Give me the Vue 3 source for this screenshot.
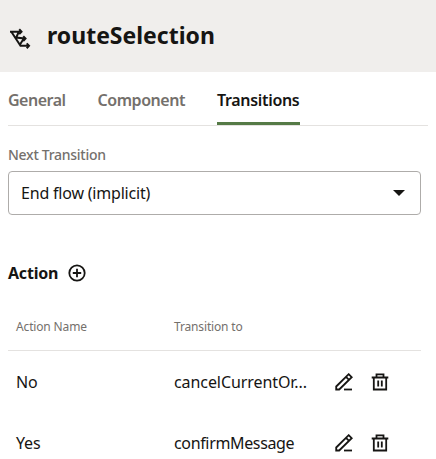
<script setup>
const tabs = [
  { label: 'General', id: 'general' },
  { label: 'Component', id: 'component' },
  { label: 'Transitions', id: 'transitions', active: true },
]
const actions = [
  { name: 'No', target: 'cancelCurrentOr...', key: 'no' },
  { name: 'Yes', target: 'confirmMessage', key: 'yes' },
]
</script>

<template>
  <div class="panel">
    <header class="header">
      <svg class="route" viewBox="0 0 20 20" fill="none" stroke="currentColor" stroke-width="2">
        <path d="M0 2.7H11M1.5 3L10.5 16.8H19M8.5 3.5L6.2 8.6L15 9.6M13.5 10L10 15.5" />
        <path d="M9.2 0.3L11.5 2.7L9.2 5.1M13.2 7.2L15.5 9.6L13.2 12M16.7 14.4L19 16.8L16.7 19.2" />
      </svg>
      <h1 class="title">routeSelection</h1>
    </header>
    <nav class="tabs">
      <a v-for="tab in tabs" :key="tab.id" class="tab" :class="[tab.id, { active: tab.active }]"><span>{{ tab.label }}</span></a>
    </nav>
    <section class="field">
      <div class="label"><span>Next Transition</span></div>
      <div class="select">
        <span class="value">End flow (implicit)</span>
        <svg class="caret" viewBox="0 0 12 6"><path d="M0 0H12L6 6Z" fill="currentColor" /></svg>
      </div>
    </section>
    <div class="action-head">
      <h2>Action</h2>
      <svg class="plus" viewBox="0 0 18 18" fill="none" stroke="currentColor" stroke-width="1.8">
        <circle cx="9" cy="9" r="7.7" />
        <path d="M9 4.8V13.2M4.8 9H13.2" />
      </svg>
    </div>
    <div class="table">
      <div class="row head">
        <span class="c-name">Action Name</span>
        <span class="c-to">Transition to</span>
      </div>
      <div v-for="a in actions" :key="a.key" class="row" :class="a.key">
        <span class="name">{{ a.name }}</span>
        <span class="target">{{ a.target }}</span>
        <span class="tools">
          <svg class="icon" viewBox="0 0 18 18" fill="none" stroke="currentColor" stroke-width="1.8">
            <path d="M1.2 16.5V13.5L13.7 1.2L16.7 4.2L4.2 16.5ZM11 3.8L14 6.8" />
            <path d="M9 16.5H17" />
          </svg>
          <svg class="icon" viewBox="0 0 18 18" fill="none" stroke="currentColor" stroke-width="1.8">
            <path d="M0.7 4.5H17.3M5.5 4.5V1.4H12.5V4.5M2.8 4.5V16.5H15.2V4.5M7.2 7.5V13.5M10.8 7.5V13.5" />
          </svg>
        </span>
      </div>
    </div>
  </div>
</template>

<style>
body { background: #fff; }
</style>

<style scoped>
.panel { width: 436px; height: 459px; overflow: hidden; background: #fff; color: #161513; font-family: "Noto Sans", sans-serif; font-size: 16px; white-space: nowrap; }
.header { display: flex; height: 72px; box-sizing: border-box; padding: 0 10px; background: #f0eeec; }
.route { width: 20px; height: 20px; margin-top: 29px; overflow: visible; }
.title { margin: 19px 0 0 17px; font-size: 23px; line-height: 32px; font-weight: 700; letter-spacing: 0; }
.tabs { display: flex; gap: 32px; height: 54px; box-sizing: border-box; margin: 0 8px; border-bottom: 1px solid #e4e2e0; }
.tab { display: block; box-sizing: border-box; height: 53px; padding-top: 16px; line-height: 24px; font-weight: 600; color: #74706c; }
.general { width: 57.5px; letter-spacing: -0.5px; }
.component { width: 87.5px; letter-spacing: -0.45px; }
.transitions { width: 83px; letter-spacing: -0.32px; }
.active { color: #161513; border-bottom: 3px solid #557a46; }
.field { padding: 19px 15px 0 8px; }
.label { height: 26px; font-size: 14px; line-height: 20px; font-weight: 500; letter-spacing: -0.28px; color: #74706c; }
.select { display: flex; align-items: center; justify-content: space-between; box-sizing: border-box; height: 44px; padding: 0 15px 0 12px; border: 1px solid #aeacaa; border-radius: 4px; }
.value { letter-spacing: -0.2px; }
.caret { width: 12px; height: 6px; }
.action-head { display: flex; align-items: center; gap: 8.5px; height: 24px; margin: 46px 8px 0; }
h2 { margin: 0; width: 51px; font-size: 16px; line-height: 24px; font-weight: 700; letter-spacing: -0.2px; }
.plus { width: 18px; height: 18px; }
.table { margin: 32px 15px 0 8px; }
.row { display: grid; grid-template-columns: 158px 161px 1fr; align-items: center; height: 61px; padding-left: 8px; line-height: 24px; }
.head { height: 34px; border-bottom: 1px solid #e4e2e0; font-size: 12px; line-height: 16px; color: #74706c; align-items: start; padding-top: 2px; box-sizing: border-box; letter-spacing: -0.15px; }
.no .target { letter-spacing: -0.08px; }
.yes .target { letter-spacing: -0.35px; }
.name { letter-spacing: -0.2px; }
.tools { display: flex; gap: 18px; }
.icon { width: 18px; height: 18px; }
</style>
